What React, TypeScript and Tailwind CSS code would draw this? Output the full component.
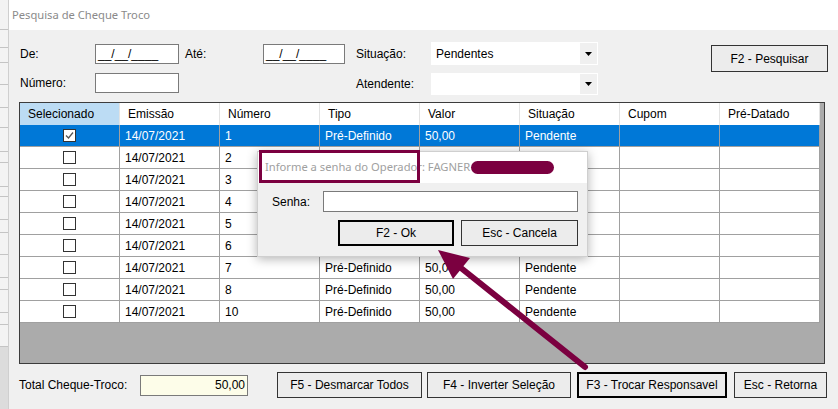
import React from 'react';

const rows = ['1', '2', '3', '4', '5', '6', '7', '8', '10'];
const cols = ['Selecionado', 'Emissão', 'Número', 'Tipo', 'Valor', 'Situação', 'Cupom', 'Pré-Datado'];
const stripLines = [30, 18, 15, 22, 23, 20, 24, 11, 24, 10, 23, 13, 22, 23, 12, 23, 12, 22];

const CheckBox: React.FC<{ checked?: boolean }> = ({ checked }) => (
  <div className="w-[13px] h-[13px] border border-[#333] bg-white flex items-center justify-center">
    {checked && (
      <svg width="11" height="11" viewBox="0 0 11 11">
        <polyline points="2,5.5 4.5,8 9,2.5" fill="none" stroke="#555" strokeWidth="1.3" />
      </svg>
    )}
  </div>
);

const WinButton: React.FC<{ label: string; className?: string; strong?: boolean }> = ({ label, className = '', strong }) => (
  <div
    className={`h-[26px] flex items-center justify-center bg-[#ececec] text-black ${
      strong ? 'border-2 border-black' : 'border border-[#333]'
    } ${className}`}
  >
    {label}
  </div>
);

const SelectBox: React.FC<{ value?: string; h: string }> = ({ value, h }) => (
  <div className={`w-[167px] ${h} bg-white flex items-center p-[1px]`}>
    <span className="flex-1 pl-[4px]">{value}</span>
    <div className="w-[17px] h-full bg-[#f0f0f0] flex items-center justify-center">
      <svg width="7" height="4" viewBox="0 0 7 4">
        <polygon points="0,0 7,0 3.5,4" fill="#000" />
      </svg>
    </div>
  </div>
);

export default function App() {
  return (
    <div
      className="relative w-[838px] h-[409px] flex overflow-hidden text-[12px] text-black bg-white"
      style={{ fontFamily: '"Liberation Sans", Arial, sans-serif' }}
    >
      {/* background window strip */}
      <div className="w-[8px] flex flex-col bg-[#f3f3f3]">
        {stripLines.map((h, i) => (
          <div key={i} className="border-b border-[#c4c4c4]" style={{ height: h }} />
        ))}
        <div className="flex-1 bg-[#dcdcdc]" />
      </div>

      {/* main window */}
      <div className="flex-1 flex flex-col border-l border-[#cfcfcf]">
        <div
          className="h-[30px] bg-white flex items-center pl-[3px] text-[11.2px] text-[#8a8a8a]"
          style={{ fontFamily: '"Noto Sans", sans-serif' }}
        >
          Pesquisa de Cheque Troco
        </div>

        <div className="flex-1 bg-[#f0f0f0] pl-[10px] pt-[12px]">
          {/* filters */}
          <div className="flex">
            <div className="flex flex-col gap-[6px]">
              <div className="flex items-center h-[23px]">
                <span className="w-[76px] pl-[1px]">De:</span>
                <div className="w-[84px] h-[20px] border border-[#7a7a7a] bg-white flex items-center pl-[2px]">__/__/____</div>
                <span className="w-[84px] pl-[6px]">Até:</span>
                <div className="w-[82px] h-[20px] border border-[#7a7a7a] bg-white flex items-center pl-[2px]">__/__/____</div>
                <span className="w-[86px] pl-[11px]">Situação:</span>
                <SelectBox value="Pendentes" h="h-[23px]" />
              </div>
              <div className="flex items-center h-[23px]">
                <span className="w-[76px] pl-[1px]">Número:</span>
                <div className="w-[84px] h-[20px] border border-[#7a7a7a] bg-white" />
                <div className="w-[166px]" />
                <span className="w-[86px] pl-[11px] mt-[2px]">Atendente:</span>
                <SelectBox h="h-[22px] mt-[2px]" />
              </div>
            </div>
            <WinButton label="F2 - Pesquisar" className="ml-[113px] mt-[3px] w-[117px] !h-[27px]" />
          </div>

          {/* grid */}
          <div className="mt-[8px] w-[806px] h-[262px] border border-[#3c3c3c] bg-[#ababab] flex flex-col">
            <div className="flex h-[22px]">
              {cols.map((c, i) => (
                <div
                  key={c}
                  className={`w-[100px] flex items-center pl-[8px] border-r border-[#e3e3e3] ${
                    i === 0 ? 'bg-[#bcdcf4]' : 'bg-white'
                  }`}
                >
                  {c}
                </div>
              ))}
            </div>
            {rows.map((n, r) => {
              const sel = r === 0;
              const cells = ['14/07/2021', n, 'Pré-Definido', '50,00', 'Pendente', '', ''];
              return (
                <div key={n} className={`flex h-[22px] w-[800px] ${sel ? 'bg-[#0078d7] text-white' : 'bg-white'}`}>
                  <div className="w-[100px] flex items-center justify-center border-r border-b border-[#a0a0a0]">
                    <CheckBox checked={sel} />
                  </div>
                  {cells.map((t, i) => (
                    <div key={i} className="w-[100px] flex items-center pl-[5px] border-r border-b border-[#a0a0a0]">
                      {t}
                    </div>
                  ))}
                </div>
              );
            })}
          </div>

          {/* footer */}
          <div className="mt-[8px] flex items-center h-[26px]">
            <span className="w-[121px]">Total Cheque-Troco:</span>
            <div className="w-[108px] h-[21px] border border-[#7a7a7a] bg-[#fdfde9] flex items-center justify-end pr-[2px]">50,00</div>
            <WinButton label="F5 - Desmarcar Todos" className="ml-[29px] w-[145px]" />
            <WinButton label="F4 - Inverter Seleção" className="ml-[5px] w-[144px]" />
            <WinButton label="F3 - Trocar Responsavel" className="ml-[6px] w-[150px]" strong />
            <WinButton label="Esc - Retorna" className="ml-[7px] w-[93px]" />
          </div>
        </div>
      </div>

      {/* password dialog */}
      <div className="absolute left-[257px] top-[151px] w-[331px] h-[106px] flex flex-col border border-[#cfcfcf] shadow-[0_2px_10px_rgba(0,0,0,0.3)]">
        <div
          className="h-[31px] bg-white flex items-center pl-[7px] text-[11.2px] text-[#a0a0a0]"
          style={{ fontFamily: '"Noto Sans", sans-serif' }}
        >
          <span>Informe a senha do Operador: FAGNER</span>
          <span className="ml-[1px] w-[83px] h-[13px] rounded-full bg-[#7b0040]" />
        </div>
        <div className="flex-1 bg-[#f0f0f0] flex flex-col pt-[8px]">
          <div className="flex items-center h-[21px]">
            <span className="w-[65px] pl-[14px]">Senha:</span>
            <div className="w-[255px] h-[21px] border border-[#7a7a7a] bg-white" />
          </div>
          <div className="flex mt-[8px] pl-[80px]">
            <WinButton label="F2 - Ok" className="w-[116px]" strong />
            <WinButton label="Esc - Cancela" className="ml-[7px] w-[117px]" />
          </div>
        </div>
      </div>

      {/* annotation box */}
      <div className="absolute left-[259px] top-[150px] w-[161px] h-[33px] border-[3px] border-[#7b0040]" />

      {/* annotation arrow */}
      <svg className="absolute left-0 top-0 pointer-events-none" width="838" height="409">
        <line x1="585" y1="367" x2="461" y2="268" stroke="#7b0040" strokeWidth="6" strokeLinecap="round" />
        <polygon points="438,250 470,258 453,279" fill="#7b0040" />
      </svg>
    </div>
  );
}
